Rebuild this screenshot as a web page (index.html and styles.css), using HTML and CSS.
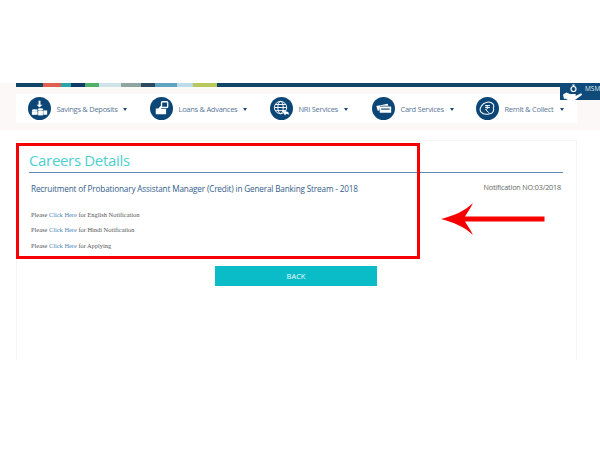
FILE: index.html
```html
<!DOCTYPE html>
<html lang="en">
<head>
    <meta charset="UTF-8">
    <title>Careers Details</title>
    <link rel="stylesheet" href="styles.css">
</head>
<body>
    <div class="top-gap"></div>

    <div class="nav-band">
        <div class="banner">
            <span class="patch patch-red"></span>
            <span class="patch patch-teal"></span>
            <span class="patch patch-navy"></span>
            <span class="patch patch-green"></span>
            <span class="patch patch-pale"></span>
            <span class="patch patch-mix"></span>
            <span class="patch patch-navy2"></span>
            <span class="patch patch-blue"></span>
            <span class="patch patch-pale2"></span>
            <span class="patch patch-lime"></span>
        </div>
        <div class="nav">
            <a class="nav-item item-savings">
                <svg class="nav-icon" viewBox="0 0 24 24"><circle cx="12" cy="12" r="12" fill="#0c4677"/><path d="M11 4h2v4h2l-3 3-3-3h2z" fill="#fff"/><ellipse cx="7" cy="14" rx="3" ry="1.300" fill="#fff"/><rect x="4" y="15" width="6" height="3.600" fill="#fff"/><ellipse cx="13" cy="13" rx="3" ry="1.300" fill="#fff"/><rect x="10.600" y="14.600" width="5" height="4.600" fill="#fff"/><rect x="16" y="14" width="4" height="4.500" fill="#fff"/></svg>
                <span>Savings &amp; Deposits</span><i class="caret"></i>
            </a>
            <a class="nav-item item-loans">
                <svg class="nav-icon" viewBox="0 0 24 24"><circle cx="12" cy="12" r="12" fill="#0c4677"/><rect x="12" y="5" width="6.500" height="6" rx="1" fill="none" stroke="#fff" stroke-width="1.400"/><path d="M6 12h2.600l2.400-2.600 1.400.6-.6 2.400h5v5.600H6z" fill="#fff"/></svg>
                <span>Loans &amp; Advances</span><i class="caret"></i>
            </a>
            <a class="nav-item item-nri">
                <svg class="nav-icon" viewBox="0 0 24 24"><circle cx="12" cy="12" r="12" fill="#0c4677"/><g fill="none" stroke="#fff" stroke-width="1"><circle cx="11" cy="11" r="6.400"/><ellipse cx="11" cy="11" rx="2.800" ry="6.400"/><path d="M4.600 11h12.800M5.600 7.800h10.800M5.600 14.200h10.800"/></g><path d="M13 14l6 1.600 1 3-3-1-1.400 1.800z" fill="#fff"/></svg>
                <span>NRI Services</span><i class="caret"></i>
            </a>
            <a class="nav-item item-card">
                <svg class="nav-icon" viewBox="0 0 24 24"><circle cx="12" cy="12" r="12" fill="#0c4677"/><path d="M4.500 9.500l12-2.500.5 2H8.500l-1 5-1.500.3z" fill="#fff"/><rect x="8" y="10" width="12" height="6.500" rx=".6" fill="#fff"/><rect x="9.500" y="12" width="9" height="1.200" fill="#0c4677"/></svg>
                <span>Card Services</span><i class="caret"></i>
            </a>
            <a class="nav-item item-remit">
                <svg class="nav-icon" viewBox="0 0 24 24"><circle cx="12" cy="12" r="12" fill="#0c4677"/><path d="M6 9c2-3.500 7-4.500 10-3 3 1.500 3 4 2 5.500 1.500 2-.5 5.500-3.500 6-3 .8-7.500.5-9.500-2-1.200-1.700-.5-4.500 1-6.500z" fill="none" stroke="#fff" stroke-width="1.100"/><path d="M9.500 9h5M9.500 11h5M10 9c3 0 3 4 0 4l3.500 3.500" fill="none" stroke="#fff" stroke-width="1"/></svg>
                <span>Remit &amp; Collect</span><i class="caret"></i>
            </a>
        </div>
        <div class="msme-tab">
            <svg class="msme-icon" viewBox="0 0 22 17"><path d="M1 11.500l3.500-2 3.500 1.500h5c1.200 0 1.200 2 0 2h-3 3.500l5-2.500c1.500-.5 2 .8 1 1.700L13 17H6L3 15.500 2 16z" fill="#fff"/><circle cx="11.500" cy="6" r="2.500" fill="none" stroke="#fff" stroke-width="1.200"/><path d="M10 1.500h3L12 3.500h-1z" fill="#fff"/></svg>
            <span>MSM</span>
        </div>
    </div>

    <div class="card">
        <h1>Careers Details</h1>
        <div class="post-row">
            <h2>Recruitment of Probationary Assistant Manager (Credit) in General Banking Stream - 2018</h2>
            <p class="notif-no">Notification NO:03/2018</p>
        </div>
        <p class="line">Please <a>Click Here</a> for English Notification</p>
        <p class="line">Please <a>Click Here</a> for Hindi Notification</p>
        <p class="line">Please <a>Click Here</a> for Applying</p>
        <a class="back-btn">BACK</a>
    </div>

    <!-- red markup drawn over the screenshot -->
    <div class="red-box"></div>
    <svg class="red-arrow" viewBox="0 0 104 32"><path d="M0 16C12 13 24 8 32 0 29 6 26 10 24 13.500H103.500V18.500H24C26 22 29 26 32 32 24 24 12 19 0 16z" fill="#f60000"/></svg>
</body>
</html>
```

FILE: styles.css
```css
html, body {
    margin: 0;
    padding: 0;
}
body {
    position: relative;
    width: 600px;
    height: 450px;
    overflow: hidden;
    background-color: #fff;
    font-family: "Open Sans", "Liberation Sans", sans-serif;
}
.top-gap {
    height: 83px;
}
.nav-band {
    position: relative;
    height: 47px;
    background-color: #fdf8f8;
    padding-left: 16px;
    overflow: hidden;
}
.banner {
    display: flex;
    height: 4px;
    background-color: #0f4668;
}
.patch {
    display: block;
    height: 4px;
}
.patch-red { width: 18px; margin-left: 27px; background-color: #e0604f; }
.patch-teal { width: 10px; background-color: #27a5a8; }
.patch-navy { width: 14px; background-color: #123a66; }
.patch-green { width: 14px; background-color: #4fb06a; }
.patch-pale { width: 22px; background-color: #cfe3ea; }
.patch-mix { width: 20px; background-color: #8fa5a0; }
.patch-navy2 { width: 14px; background-color: #2a4a60; }
.patch-blue { width: 22px; background-color: #5fa5c0; }
.patch-pale2 { width: 16px; background-color: #bcdcec; }
.patch-lime { width: 24px; background-color: #b9c85a; }
.nav {
    display: flex;
    align-items: center;
    width: 561px;
    height: 29px;
    margin-top: 7px;
    background-color: #fff;
    color: #5a7799;
    font-size: 7.500px;
    letter-spacing: -0.28px;
    white-space: nowrap;
}
.nav-item {
    display: flex;
    align-items: center;
    flex: none;
}
.item-savings { width: 122px; margin-left: 12px; }
.item-loans { width: 120px; }
.item-nri { width: 102px; }
.item-card { width: 104px; }
.item-remit { width: 90px; }
.nav-icon {
    width: 23px;
    height: 23px;
    margin-right: 5.500px;
    flex: none;
}
.caret {
    width: 0;
    height: 0;
    margin: 2px 0 0 6px;
    border-left: 2.500px solid transparent;
    border-right: 2.500px solid transparent;
    border-top: 3px solid #1d4a78;
}
.msme-tab {
    position: absolute;
    top: 0;
    left: 560px;
    width: 40px;
    height: 17px;
    display: flex;
    background-color: #0f4a7a;
    color: #dfe8f0;
    font-size: 6.500px;
}
.msme-icon {
    width: 22px;
    height: 17px;
    margin-left: 2px;
    flex: none;
}
.msme-tab span {
    margin-left: 1px;
    line-height: 11px;
}
.card {
    width: 534px;
    height: 219px;
    margin: 10px 0 0 16px;
    padding: 0 13px 0 12px;
    border-left: 1px solid #f7f4f4;
    border-right: 1px solid #f7f4f4;
    border-top: 1px solid #f9f6f6;
}
.card h1 {
    margin: 0;
    height: 31px;
    line-height: 38px;
    font-size: 15px;
    font-weight: 400;
    letter-spacing: -0.33px;
    color: #4dcfd1;
    border-bottom: 1.500px solid #5b8ab2;
}
.post-row {
    display: flex;
    justify-content: space-between;
    padding: 9px 2px 0;
    height: 18px;
}
.post-row h2 {
    margin: 0;
    font-size: 8.200px;
    font-weight: 400;
    letter-spacing: -0.16px;
    line-height: 14px;
    color: #34608c;
}
.notif-no {
    margin: 0;
    font-size: 7.200px;
    letter-spacing: -0.15px;
    line-height: 10px;
    color: #666;
}
.line {
    margin: 0 0 0 2px;
    height: 15.500px;
    line-height: 15.500px;
    font-family: "Liberation Serif", serif;
    font-size: 6.400px;
    color: #555;
}
.post-row + .line {
    margin-top: 6.500px;
}
.line a {
    color: #4a86b8;
}
.back-btn {
    display: block;
    width: 162px;
    height: 20px;
    margin: 12.500px 0 0 186px;
    background-color: #0abcc8;
    color: #e8fafa;
    font-size: 7.500px;
    line-height: 20px;
    text-align: center;
}
.red-box {
    position: absolute;
    left: 16px;
    top: 143px;
    width: 398px;
    height: 110px;
    border: 3px solid #f60000;
}
.red-arrow {
    position: absolute;
    left: 441px;
    top: 203px;
    width: 104px;
    height: 32px;
}
```
